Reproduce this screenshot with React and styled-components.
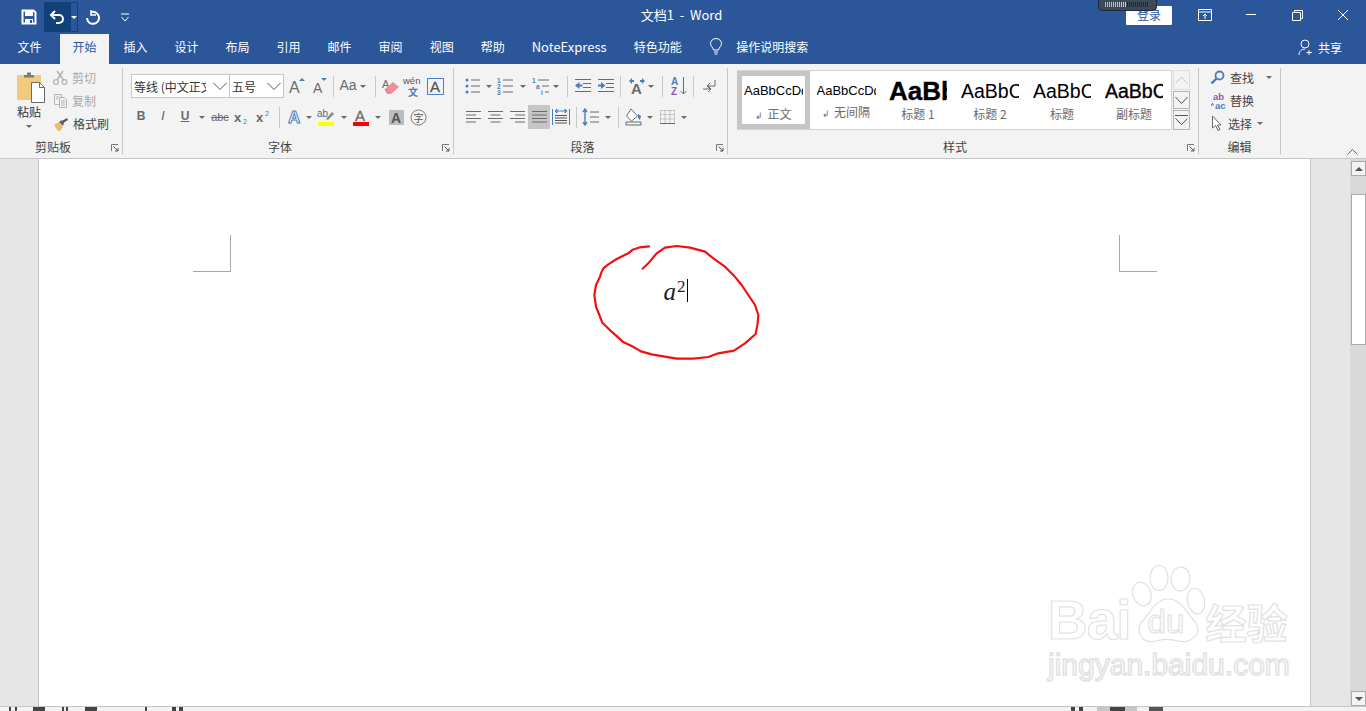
import React from "react";
import styled, { createGlobalStyle } from "styled-components";

const UI = `"Noto Sans CJK SC", "Liberation Sans", sans-serif`;
const LAT = `"Liberation Sans", "Noto Sans CJK SC", sans-serif`;
const GRAY = "#6a6a6a";
const BLUE = "#4a7ebb";

const Global = createGlobalStyle`
  html, body { margin: 0; padding: 0; background: #fff; overflow: hidden; }
  * { box-sizing: border-box; }
`;
const Shell = styled.div`
  width: 1366px; height: 711px; display: flex; flex-direction: column; overflow: hidden;
  font-family: ${UI}; font-size: 12px; color: #444;
`;
const TitleBar = styled.header`
  position: relative; height: 32px; flex: none; background: #2b579a; color: #fff;
  display: grid; grid-template-columns: 1fr auto 1fr;
`;
const Qat = styled.div`display: flex; padding: 2px 0 0 18px; align-items: flex-start;`;
const QatBtn = styled.div`
  width: ${p => p.$w}px; height: 30px; margin-left: ${p => p.$ml || 0}px; display: flex; align-items: center; justify-content: center;
  background: ${p => p.$on ? "#124078" : "transparent"};
  border: ${p => p.$edge ? "1px solid #124078" : "0"};
`;
const WhiteCaret = styled.span`width: 0; height: 0; border: 3px solid transparent; border-top: 3px solid #fff; border-bottom: 0;`;
const DocTitle = styled.div`font-size: 13px; line-height: 30px; white-space: pre; margin-left: -3px;`;
const WinArea = styled.div`display: flex; justify-content: flex-end; align-items: flex-start;`;
const Login = styled.div`
  width: 46px; height: 19px; margin: 6px 10px 0 0; background: #fff; color: #2b579a; border-radius: 1px;
  text-align: center; line-height: 18px; font-size: 12px;
`;
const WinBtn = styled.div`width: 46px; height: 30px; display: flex; align-items: center; justify-content: center;`;
const Meter = styled.div`
  position: absolute; left: 1098px; top: -1px; width: 59px; height: 12px; background: #3d4a5a; border: 1px solid #20293a;
  border-radius: 0 0 4px 4px; display: flex; gap: 1px; padding: 2px 5px 0 6px;
`;
const Tick = styled.i`width: 1px; height: 5px; background: ${p => p.$c};`;

const TabBar = styled.nav`height: 32px; flex: none; background: #2b579a; color: #fff; display: flex; padding-left: 5px; align-items: stretch;`;
const Tab = styled.div`
  padding: 0 12.5px; margin: 2px ${p => p.$mr || 2}px 0 0; line-height: 25px; font-size: ${p => p.$s || 12}px; white-space: nowrap;
  background: ${p => p.$on ? "#f3f3f3" : "transparent"}; color: ${p => p.$on ? "#2b579a" : "#fff"};
`;
const Search = styled.div`display: flex; align-items: center; gap: 13px; margin: 0 0 4px 13px; font-size: 12px;`;
const Share = styled.div`display: flex; align-items: center; gap: 5px; margin: 0 24px 2px auto;`;

const Ribbon = styled.section`
  height: 95px; flex: none; background: #f3f3f3; border-bottom: 1px solid #c6c6c6; padding: 4px 0;
  display: flex; position: relative;
`;
const Group = styled.div`
  width: ${p => p.$w}px; flex: none; height: 86px; border-right: 1px solid #c6c6c6; display: flex; flex-direction: column;
`;
const Body = styled.div`flex: 1; min-height: 0; display: flex; flex-direction: column;`;
const RowPair = styled.div`display: flex; flex-direction: column; gap: 7px; padding-top: 6px;`;
const Row = styled.div`display: flex; align-items: center; height: 24px; margin-left: ${p => p.$ml || 0}px;`;
const Foot = styled.div`
  height: 16px; flex: none; display: grid; grid-template-columns: 1fr auto 1fr; align-items: center;
  padding-right: ${p => p.$launch ? 16 : 0}px; padding-top: 2px; font-size: 12px; line-height: 14px; color: #444;
`;
const Launcher = styled.svg`grid-column: 3; justify-self: end; margin-right: -13px; margin-top: 1px;`;
const Tool = styled.div`
  width: ${p => p.$w || 22}px; height: ${p => p.$h || 22}px; flex: none; margin-left: ${p => p.$ml || 0}px;
  display: flex; align-items: center; justify-content: center; background: ${p => p.$on ? "#c6c6c6" : "transparent"};
`;
const Glyph = styled.span`
  font-family: ${LAT}; font-size: ${p => p.$s || 13}px; font-weight: ${p => p.$b ? 700 : 400}; font-style: ${p => p.$i ? "italic" : "normal"};
  color: ${p => p.$c || GRAY}; text-decoration: ${p => p.$d || "none"}; line-height: 1.1; white-space: nowrap;
`;
const Caret = styled.span`
  width: ${p => p.$w || 8}px; flex: none; margin-left: ${p => p.$ml || 0}px; height: 3px; display: flex; justify-content: center;
  &::before { content: ""; border: 3px solid transparent; border-top: 3px solid ${GRAY}; border-bottom: 0; }
`;
const VSep = styled.i`width: 1px; height: 21px; flex: none; background: #c8c8c8; margin-left: ${p => p.$ml}px; margin-right: ${p => p.$mr}px;`;

const ClipRow = styled.div`display: flex; flex: 1; min-height: 0;`;
const PasteCol = styled.div`width: 42px; margin-left: 8px; display: flex; flex-direction: column; align-items: center; padding-top: 3px; flex: none;`;
const PasteArt = styled.div`margin-left: 4px; height: 32px;`;
const PasteLabel = styled.div`font-size: 12px; color: #333; line-height: 16px; margin: 1px 0 5px;`;
const SmallCol = styled.div`display: flex; flex-direction: column; margin-left: ${p => p.$ml}px; margin-top: -2px;`;
const SmallBtn = styled.div`height: 23px; display: flex; align-items: center; gap: ${p => p.$gap || 4}px; color: ${p => p.$off ? "#a8a8a8" : "#444"}; font-size: 12px; white-space: nowrap;`;
const Combo = styled.div`
  width: ${p => p.$w}px; height: 24px; flex: none; background: #fff; border: 1px solid #c6c6c6; margin-left: ${p => p.$ml || 0}px;
  display: flex; align-items: center; justify-content: space-between; padding: 0 2px 0 2px; color: #333; font-size: 12px;
`;
const ComboText = styled.span`width: ${p => p.$w}px; overflow: hidden; white-space: nowrap;`;

const GalleryWrap = styled.div`display: flex; margin: 2px 0 0 9px;`;
const Gallery = styled.div`width: 435px; height: 60px; background: #fff; border: 1px solid #d4d4d4; border-left: 0; display: flex; flex: none;`;
const StyleItem = styled.div`
  width: ${p => p.$on ? 73 : 72}px; flex: none; display: flex; flex-direction: column; align-items: center; justify-content: space-between;
  border: ${p => p.$on ? "5px solid #c6c6c6" : "0"}; padding: ${p => p.$on ? "2px 0 1px" : "7px 0 8px"};
`;
const Preview = styled.div`
  width: ${p => p.$w}px; height: 26px; overflow: hidden; white-space: nowrap; line-height: 26px; font-family: ${LAT}; color: #000;
  font-size: ${p => p.$s}px; font-weight: ${p => p.$b ? 700 : 400};
  -webkit-text-stroke: ${p => p.$stroke ? ".35px #000" : "0"};
`;
const StyleName = styled.div`font-size: 12px; line-height: 15px; color: #6a6a6a; white-space: nowrap;`;
const Mark = styled.span`font-size: 9px; margin-right: 4px;`;
const ScrollCol = styled.div`display: flex; flex-direction: column; gap: 1px; width: 17px; margin-left: 1px; flex: none;`;
const ScrollCell = styled.div`
  height: ${p => p.$h}px; border: 1px solid ${p => p.$off ? "#dcdcdc" : "#b4b4b4"}; display: flex; align-items: center; justify-content: center;
`;
const Collapse = styled.svg`position: absolute; left: 1347px; top: 85px;`;

const DocArea = styled.main`flex: 1; min-height: 0; display: flex; background: #e6e6e6;`;
const Gutter = styled.div`width: ${p => p.$w}px; flex: none;`;
const Page = styled.div`
  width: 1273px; flex: none; position: relative; background: #fff; border-left: 1px solid #c6c6c6; border-right: 1px solid #c6c6c6;
  padding: 76px 153px 0 154px; overflow: hidden;
`;
const Marks = styled.div`display: flex; justify-content: space-between;`;
const CropMark = styled.div`
  width: 38px; height: 37px; border-bottom: 1px solid #a8a8a8;
  ${p => p.$side === "left" ? "border-right" : "border-left"}: 1px solid #a8a8a8;
`;
const MathLine = styled.div`display: flex; justify-content: center; align-items: flex-start; margin-top: 7px; height: 24px; padding-left: 1px;`;
const Var = styled.span`font-family: "Liberation Serif", serif; font-style: italic; font-size: 25px; line-height: 25px; color: #222;`;
const Sup = styled.span`font-family: "Liberation Serif", serif; font-size: 17px; line-height: 16px; color: #222; margin-left: 1px;`;
const TextCaret = styled.i`width: 1px; height: 23px; background: #000; margin-left: 1px;`;
const Scribble = styled.svg`position: absolute; left: 541px; top: 76px; overflow: visible;`;
const Watermark = styled.div`position: absolute; left: 1009px; top: 406px; width: 250px; display: flex; flex-direction: column;`;
const WmRow = styled.div`display: flex; align-items: flex-end; height: 78px;`;
const WmText = styled.span`
  font-family: ${p => p.$cjk ? UI : LAT}; font-size: ${p => p.$s}px; line-height: ${p => p.$lh}px; color: #fff; font-weight: ${p => p.$w || 400};
  letter-spacing: ${p => p.$ls || 0}px; -webkit-text-stroke: ${p => p.$sw || 1.2}px #e2e2e2; white-space: nowrap;
`;
const Paw = styled.div`position: relative; width: 75px; height: 78px; flex: none;`;
const PawDu = styled(WmText)`position: absolute; left: 17px; top: 39px;`;
const WmLine = styled(WmText)`margin-top: 5px; display: block;`;

const ScrollBar = styled.aside`width: 16px; flex: none; background: #d9d9d9; padding-top: 2px; display: flex; flex-direction: column;`;
const ArrowBtn = styled.div`width: 15px; height: ${p => p.$h}px; margin-left: 1px; background: #f3f3f3; border: 1px solid #ababab; display: flex; align-items: center; justify-content: center;`;
const Thumb = styled.div`width: 15px; height: 151px; margin: 18px 0 auto 1px; background: #fff; border: 1px solid #ababab;`;
const StatusBar = styled.footer`height: 5px; flex: none; background: #f3f3f3; border-top: 1px solid #c6c6c6; display: flex; overflow: hidden;`;
const StatusBit = styled.i`
  width: ${p => p.$w}px; height: 4px; flex: none; margin-left: ${p => p.$ml}px; background: ${p => p.$c || "#444"};
  display: flex; justify-content: center;
`;

const S = ({ w = 18, h = 18, children, ...r }) => <svg width={w} height={h} viewBox={`0 0 ${w} ${h}`} fill="none" {...r}>{children}</svg>;
const L = (p) => <path stroke={GRAY} strokeWidth="1" {...p} />;

const Lines = ({ d }) => <L d={d} />;
const SaveIcon = () => <S w={16} h={16}><path d="M1.500 1.500h11l2 2v11h-13z" stroke="#fff" strokeWidth="2" /><path d="M4 2h8v5H4zM4 10h8v5H4z" fill="#fff" /><path d="M9 11h2v3H9z" fill="#2b579a" /></S>;
const UndoIcon = () => <S w={16} h={16}><path d="M6 2 2 6l4 4" stroke="#fff" strokeWidth="2" /><path d="M2.500 6H10a3.500 3.500 0 0 1 0 8H7" stroke="#fff" strokeWidth="2" /></S>;
const RedoIcon = () => <S w={16} h={16}><path d="M6 1v5h5" stroke="#fff" strokeWidth="1.600" /><path d="M6 3.200A6 6 0 1 1 2 9" stroke="#fff" strokeWidth="2" /></S>;
const CustomizeIcon = () => <S w={10} h={9}><path d="M1 1h8" stroke="#fff" /><path d="M1.500 4 5 8l3.500-4" stroke="#fff" /></S>;

const PasteIcon = () => <S w={30} h={32}>
  <path d="M1 4h24v25H1z" fill="#f1c97f" />
  <path d="M8 6V4h3V1.500h4V4h3v2.500H8z" fill="#7a7a7a" />
  <path d="M15.500 11.500h8l5 5v15h-13z" fill="#fff" stroke="#6a6a6a" />
  <path d="M23.500 11.500v5h5" stroke="#6a6a6a" />
</S>;
const ScissorsIcon = () => <S w={15} h={15}><circle cx="3" cy="12" r="2.400" stroke="#b4b4b4" strokeWidth="1.300" /><circle cx="11.500" cy="12" r="2.400" stroke="#b4b4b4" strokeWidth="1.300" /><path d="M4 10 10 1M10.500 10 4 1" stroke="#b4b4b4" strokeWidth="1.600" /></S>;
const CopyIcon = () => <S w={15} h={15}><path d="M1.500 1.500h7v10h-7z" stroke="#b4b4b4" /><path d="M6.500 4.500h5l2 2v8h-7z" fill="#f3f3f3" stroke="#b4b4b4" /><path d="M8 8h4M8 10h4M8 12h4M3 4h3M3 6h2" stroke="#b4b4b4" /></S>;
const BrushIcon = () => <S w={16} h={14}><path d="M1 8l5-3 4 5-3 4H5z" fill="#e9bc72" /><path d="M6 5l3-2 2 3-1 3z" fill="#666" /><path d="M9 4l5-3 1 2-5 3z" fill="#555" /></S>;

const Grow = ({ up }) => <S w={22} h={22}>
  <text x={up ? 3 : 5} y="18" fontFamily="Liberation Sans" fontSize={up ? 16 : 14} fill={GRAY}>A</text>
  <path d={up ? "M13 6l3-3 3 3z" : "M13 3h6l-3 3z"} fill={BLUE} />
</S>;
const Eraser = () => <S w={20} h={20}><text x="1" y="12" fontFamily="Liberation Sans" fontSize="11" fill={GRAY}>A</text><path d="M4 13l8-7 6 5-8 7H7z" fill="#ec8f9c" /><path d="M4 13l3 5" stroke="#c26" strokeWidth=".6" /></S>;
const Wen = () => <S w={22} h={22}><text x="1" y="9" fontFamily="Liberation Sans" fontSize="9.500" fill="#555">wén</text><text x="6" y="21" fontFamily="Noto Sans CJK SC" fontSize="10" fontWeight="700" fill={BLUE}>文</text></S>;
const BoxA = () => <S w={17} h={17}><path d="M.5.500h16v16H.5z" stroke={BLUE} /><text x="3" y="14" fontFamily="Liberation Sans" fontSize="15" stroke="#555" strokeWidth=".3" fill="#555">A</text></S>;
const GlowA = () => <S w={20} h={20}><text x="3" y="16" fontFamily="Liberation Sans" fontWeight="700" fontSize="17" fill="#fff" stroke={BLUE} strokeWidth="1">A</text></S>;
const Highlight = () => <S w={18} h={20}><text x="0" y="10" fontFamily="Liberation Sans" fontSize="10" fill={GRAY}>ab</text><path d="M9 12l6-7 2 2-6 6z" fill="#8a8a8a" /><path d="M1 15h16v4H1z" fill="#ff0" /></S>;
const ColorA = () => <S w={18} h={20}><text x="3" y="14" fontFamily="Liberation Sans" fontSize="15" fill={GRAY} stroke={GRAY} strokeWidth=".3">A</text><path d="M1 15h16v4H1z" fill="#f00" /></S>;
const ShadeA = () => <S w={15} h={15}><path d="M0 0h15v15H0z" fill="#bdbdbd" /><text x="2" y="12.500" fontFamily="Liberation Sans" fontSize="14" fontWeight="700" fill="#555">A</text></S>;
const Circled = () => <S w={17} h={17}><circle cx="8.500" cy="8.500" r="7.500" stroke="#777" /><text x="3.500" y="12.500" fontFamily="Noto Sans CJK SC" fontSize="10" fill="#555">字</text></S>;
const Sub = ({ up }) => <S w={18} h={16}><text x="1" y="13" fontFamily="Liberation Sans" fontWeight="700" fontSize="13" fill={GRAY}>x</text><text x="10" y={up ? 7 : 15} fontFamily="Liberation Sans" fontSize="7" fill={BLUE}>2</text></S>;

const Dot = ({ y }) => <circle cx="3" cy={y} r="1.500" fill={BLUE} />;
const Bullets = () => <S><Dot y={3} /><Dot y={9} /><Dot y={15} /><Lines d="M7 3h9M7 9h9M7 15h9" /></S>;
const Small = ({ x, y, t }) => <text x={x} y={y} fontFamily="Liberation Sans" fontWeight="700" fontSize="6.500" fill={BLUE}>{t}</text>;
const Numbers = () => <S><Small x={0} y={6} t="1" /><Small x={0} y={12} t="2" /><Small x={0} y={18} t="3" /><Lines d="M6 3h10M6 9h10M6 15h10" /></S>;
const Multi = () => <S><Small x={0} y={6} t="1" /><Small x={4} y={12} t="a" /><Small x={9} y={18} t="i" /><Lines d="M6 3h11M10 9h7M13 15h4" /></S>;
const Outdent = () => <S><Lines d="M1 2.500h16M9 6.500h8M9 10.500h8M1 14.500h16" /><path d="M1 8.500 5.500 5v2.500h3v2h-3V12z" fill={BLUE} /></S>;
const Indent = () => <S><Lines d="M1 2.500h16M9 6.500h8M9 10.500h8M1 14.500h16" /><path d="M8.500 8.500 4 5v2.500H1v2h3V12z" fill={BLUE} /></S>;
const Layout = () => <S w={18} h={20}><text x="3" y="18" fontFamily="Liberation Sans" fontWeight="700" fontSize="15" fill={GRAY}>A</text><path d="M1 5l3-3v2h2v2H4v2zM17 5l-3-3v2h-2v2h2v2z" fill={BLUE} /></S>;
const Sort = () => <S w={18} h={22}><text x="1" y="10" fontFamily="Liberation Sans" fontWeight="700" fontSize="10" fill={BLUE}>A</text><text x="1" y="20" fontFamily="Liberation Sans" fontWeight="700" fontSize="10" fill="#8e5ab0">Z</text><L d="M13.500 2v17M10.500 16l3 3 3-3" /></S>;
const ParaMark = () => <S w={14} h={14}><L d="M13 1v6H5M8 4 5 7l3 3" /><L d="M1 10h8M6 7l3 3-3 3" /></S>;
const Align = ({ d }) => <S w={16} h={14}><Lines d={d} /></S>;
const Dist = () => <S w={18} h={18}><path d="M.5 1v16M17.500 1v16" stroke={BLUE} /><path d="M3 3h12M3 3l2-2v4zM15 3l-2-2v4z" stroke={BLUE} /><path d="M3 7.500h12M3 10h12M3 12.500h12M3 15h12" stroke="#555" /></S>;
const Spacing = () => <S w={18} h={18}><path d="M3 1v16M1 4l2-3 2 3M1 14l2 3 2-3" stroke={BLUE} strokeWidth="1.400" /><Lines d="M8 4h9M8 9h9M8 14h9" /></S>;
const Shading = () => <S w={18} h={18}><path d="M1 14h15v3H1z" stroke={GRAY} /><path d="M6 1 1.500 8l5 5 6-5z" fill="#fff" stroke={GRAY} /><path d="M13 6l3 2-1 4-2-2z" fill={BLUE} /></S>;
const Borders = () => <S w={15} h={14}><path d="M.5.500h14M.5 4.500h14M.5 9h14M.5.500v13M5 .5v13M10 .5v13M14.500.500v13" stroke="#9a9a9a" strokeDasharray="1 1" /><path d="M0 13.500h15" stroke={GRAY} /></S>;
const Chevron = ({ w = 14, c = "#555", up, h = 8 }) => <S w={w} h={h}><path d={up ? `M.5 ${h - .5}L${w / 2} 1 ${w - .5} ${h - .5}` : `M.5 1L${w / 2} ${h - .5} ${w - .5} 1`} stroke={c} /></S>;
const FindIcon = () => <S w={15} h={15}><circle cx="9.500" cy="5.500" r="4" stroke={BLUE} strokeWidth="1.800" /><path d="M6.500 8.500 1.500 13.500" stroke={BLUE} strokeWidth="2.400" /></S>;
const ReplaceIcon = () => <S w={17} h={18}><text x="3" y="8" fontFamily="Liberation Sans" fontWeight="700" fontSize="9.500" fill="#8e5ab0">ab</text><text x="5" y="17" fontFamily="Liberation Sans" fontWeight="700" fontSize="9.500" fill="#4f7fb0">ac</text><path d="M1 13h3M1 13l2-2" stroke={BLUE} /></S>;
const CursorIcon = () => <S w={13} h={17}><path d="M2.500 1v12l3-2.500 2.500 5 2-1-2.500-4.500H11z" stroke={GRAY} fill="#fff" /></S>;
const LaunchIcon = () => <><path d="M.5 7V.5H7" stroke="#777" /><path d="M2.500 2.500 7 7M4 7h3V4" stroke="#555" /></>;
const Bulb = () => <S w={14} h={17}><path d="M4.500 12C4 9 1.500 8.500 1.500 5.500a5.500 5 0 0 1 11 0C12.500 8.500 10 9 9.500 12zM5 14h4M5.500 16h3" stroke="#fff" /></S>;
const Person = () => <S w={15} h={17}><circle cx="7" cy="5" r="4" stroke="#fff" /><path d="M1 16c0-4 3-6 6-6M11 11v5M8.500 13.500h5.500" stroke="#fff" /></S>;
const Launch = () => <Launcher width="8" height="8" viewBox="0 0 8 8" fill="none"><LaunchIcon /></Launcher>;

const meterColors = ["#6fd6c9", "#7cd8bc", "#85daae", "#90dba0", "#a0dc92", "#b3dd84", "#c4de7a", "#cfe070"];
const SCRIBBLE = "207,34 180,37 158,44 145,55 128,63 110,72 85,88 70,100 64,113 60,125 48,150 43,180 48,215 58,240 67,263 95,290 128,320 155,333 183,349 215,358 250,364 290,371 340,371 385,366 415,355 462,347 495,325 527,297 533,265 535,240 525,210 505,180 485,150 462,122 435,95 400,70 375,50 330,38 290,33 255,38 230,55 205,85 188,101";

const TabsList = ["插入", "设计", "布局", "引用", "邮件", "审阅", "视图", "帮助"];
const STYLES = [
  { n: "正文", t: "AaBbCcDd", s: 13, w: 59, m: 1, on: 1 },
  { n: "无间隔", t: "AaBbCcDd", s: 13, w: 59, m: 1 },
  { n: "标题 1", t: "AaBbC", s: 26, w: 58, stroke: 1, b: 1 },
  { n: "标题 2", t: "AaBbC", s: 19.500, w: 58 },
  { n: "标题", t: "AaBbC", s: 19.500, w: 58 },
  { n: "副标题", t: "AaBbC", s: 19.500, w: 58, stroke: 1 },
];

export default function App() {
  return (
    <Shell>
      <Global />
      <TitleBar>
        <Qat>
          <QatBtn $w={22}><SaveIcon /></QatBtn>
          <QatBtn $w={26} $ml={4} $on><UndoIcon /></QatBtn>
          <QatBtn $w={8} $edge><WhiteCaret /></QatBtn>
          <QatBtn $w={22} $ml={4}><RedoIcon /></QatBtn>
          <QatBtn $w={22} $ml={10}><CustomizeIcon /></QatBtn>
        </Qat>
        <DocTitle>文档1  -  Word</DocTitle>
        <WinArea>
          <Login>登录</Login>
          <WinBtn><S w={14} h={12}><path d="M.5.500h13v11H.5zM0 3h14M7 10V5M5 7l2-2 2 2" stroke="#fff" /></S></WinBtn>
          <WinBtn><S w={12} h={2}><path d="M1 .5h10" stroke="#fff" /></S></WinBtn>
          <WinBtn><S w={11} h={11}><path d="M.5 2.500h8v8h-8zM2.500 2.500v-2h8v8h-2" stroke="#fff" /></S></WinBtn>
          <WinBtn><S w={12} h={12}><path d="M1 1l10 10M11 1 1 11" stroke="#fff" /></S></WinBtn>
        </WinArea>
        <Meter>
          {Array.from({ length: 22 }, (_, i) => <Tick key={i} $c={i < 11 ? meterColors[Math.min(7, Math.floor(i * .75))] : "#1f2935"} />)}
        </Meter>
      </TitleBar>

      <TabBar>
        <Tab $mr={6}>文件</Tab>
        <Tab $on>开始</Tab>
        {TabsList.map(t => <Tab key={t}>{t}</Tab>)}
        <Tab $s={13}>NoteExpress</Tab>
        <Tab>特色功能</Tab>
        <Search><Bulb /><span>操作说明搜索</span></Search>
        <Share><Person /><span>共享</span></Share>
      </TabBar>

      <Ribbon>
        <Group $w={123}>
          <ClipRow>
            <PasteCol>
              <PasteArt><PasteIcon /></PasteArt>
              <PasteLabel>粘贴</PasteLabel>
              <Caret />
            </PasteCol>
            <SmallCol $ml={3}>
              <SmallBtn $off><ScissorsIcon /><span>剪切</span></SmallBtn>
              <SmallBtn $off><CopyIcon /><span>复制</span></SmallBtn>
              <SmallBtn><BrushIcon /><span>格式刷</span></SmallBtn>
            </SmallCol>
          </ClipRow>
          <Foot $launch><span />剪贴板<Launch /></Foot>
        </Group>

        <Group $w={331}>
          <Body>
            <RowPair>
              <Row $ml={8}>
                <Combo $w={99}><ComboText $w={72}>等线 (中文正文)</ComboText><Chevron /></Combo>
                <Combo $w={55} $ml={-1}><ComboText $w={30}>五号</ComboText><Chevron /></Combo>
                <Tool $ml={2}><Grow up /></Tool>
                <Tool><Grow /></Tool>
                <VSep $ml={3} $mr={3} />
                <Tool><Glyph $s={14}>Aa</Glyph></Tool>
                <Caret />
                <VSep $ml={8} $mr={4} />
                <Tool><Eraser /></Tool>
                <Tool><Wen /></Tool>
                <Tool><BoxA /></Tool>
              </Row>
              <Row $ml={7}>
                <Tool><Glyph $b $s={12}>B</Glyph></Tool>
                <Tool><Glyph $i $s={12} $c="#555">I</Glyph></Tool>
                <Tool><Glyph $d="underline" $s={12} $b>U</Glyph></Tool>
                <Caret $w={12} />
                <Tool $ml={1}><Glyph $s={11} $d="line-through">abc</Glyph></Tool>
                <Tool><Sub /></Tool>
                <Tool><Sub up /></Tool>
                <VSep $ml={4} $mr={4} />
                <Tool><GlowA /></Tool>
                <Caret $w={6} />
                <Tool $ml={3}><Highlight /></Tool>
                <Caret $w={12} $ml={1} />
                <Tool><ColorA /></Tool>
                <Caret $w={12} />
                <Tool $ml={1}><ShadeA /></Tool>
                <Tool><Circled /></Tool>
              </Row>
            </RowPair>
          </Body>
          <Foot $launch><span />字体<Launch /></Foot>
        </Group>

        <Group $w={274}>
          <Body>
            <RowPair>
              <Row $ml={8}>
                <Tool><Bullets /></Tool>
                <Caret $w={10} />
                <Tool $ml={1}><Numbers /></Tool>
                <Caret $w={12} />
                <Tool $ml={1}><Multi /></Tool>
                <Caret $w={8} />
                <VSep $ml={7} $mr={4} />
                <Tool><Outdent /></Tool>
                <Tool $ml={1}><Indent /></Tool>
                <VSep $ml={3} $mr={5} />
                <Tool><Layout /></Tool>
                <Caret $w={6} />
                <VSep $ml={8} $mr={5} />
                <Tool><Sort /></Tool>
                <VSep $ml={3} $mr={4} />
                <Tool><ParaMark /></Tool>
              </Row>
              <Row $ml={8}>
                <Tool><Align d="M1 1.500h15M1 5h10M1 8.500h15M1 12h10" /></Tool>
                <Tool><Align d="M1 1.500h15M3.500 5h10M1 8.500h15M3.500 12h10" /></Tool>
                <Tool><Align d="M1 1.500h15M6 5h10M1 8.500h15M6 12h10" /></Tool>
                <Tool $on $h={24}><Align d="M1 1.500h15M1 5h15M1 8.500h15M1 12h15" /></Tool>
                <Tool><Dist /></Tool>
                <VSep $ml={4} $mr={3} />
                <Tool><Spacing /></Tool>
                <Caret $w={12} />
                <VSep $ml={4} $mr={4} />
                <Tool><Shading /></Tool>
                <Caret $w={10} />
                <Tool $ml={1}><Borders /></Tool>
                <Caret $w={12} />
              </Row>
            </RowPair>
          </Body>
          <Foot $launch><span />段落<Launch /></Foot>
        </Group>

        <Group $w={471}>
          <Body>
            <GalleryWrap>
              <Gallery>
                {STYLES.map(s => (
                  <StyleItem key={s.n} $on={s.on}>
                    <Preview $s={s.s} $w={s.w} $b={s.b} $stroke={s.stroke}>{s.t}</Preview>
                    <StyleName>{s.m ? <Mark>↲</Mark> : null}{s.n}</StyleName>
                  </StyleItem>
                ))}
              </Gallery>
              <ScrollCol>
                <ScrollCell $h={20} $off><Chevron w={13} up c="#c8c8c8" /></ScrollCell>
                <ScrollCell $h={18}><Chevron w={13} /></ScrollCell>
                <ScrollCell $h={20}><S w={13} h={12}><path d="M0 1.500h13M.5 4.500 6.500 10.500 12.500 4.500" stroke="#555" /></S></ScrollCell>
              </ScrollCol>
            </GalleryWrap>
          </Body>
          <Foot $launch><span />样式<Launch /></Foot>
        </Group>

        <Group $w={82}>
          <Body>
            <SmallCol $ml={11}>
              <SmallBtn $gap={5}><FindIcon /><span>查找</span><Caret $ml={6} /></SmallBtn>
              <SmallBtn $gap={3}><ReplaceIcon /><span>替换</span></SmallBtn>
              <SmallBtn $gap={5}><CursorIcon /><span>选择</span><Caret $ml={-1} /></SmallBtn>
            </SmallCol>
          </Body>
          <Foot><span />编辑<span /></Foot>
        </Group>
        <Collapse width="11" height="6" viewBox="0 0 11 6" fill="none"><path d="M.5 5.500 5.500.500l5 5" stroke="#666" /></Collapse>
      </Ribbon>

      <DocArea>
        <Gutter $w={38} />
        <Page>
          <Marks><CropMark $side="left" /><CropMark $side="right" /></Marks>
          <MathLine>
            <Var>a</Var><Sup>2</Sup><TextCaret />
          </MathLine>
          <Scribble width="190" height="130" viewBox="0 0 570 390" fill="none">
            <polyline points={SCRIBBLE} stroke="#f40f0f" strokeWidth="6.500" strokeLinejoin="round" strokeLinecap="round" />
          </Scribble>
          <Watermark>
            <WmRow>
              <WmText $s={55} $lh={46} $w={700} $ls={-1}>Bai</WmText>
              <Paw>
                <svg width="75" height="78" viewBox="0 0 75 78" fill="none">
                  <g stroke="#e0e0e0" fill="#fff" strokeWidth="1.200">
                    <ellipse cx="11" cy="29" rx="9" ry="12" transform="rotate(-20 11 29)" />
                    <ellipse cx="28" cy="13" rx="9" ry="12.500" />
                    <ellipse cx="49.500" cy="14" rx="9.500" ry="12" transform="rotate(6 49.500 14)" />
                    <ellipse cx="65" cy="36" rx="8.500" ry="13" transform="rotate(-12 65 36)" />
                    <path d="M37 34C50 34 56 48 65 58 72 70 58 79 47 76 40 74 32 74 24 76 13 79 4 69 10 58 18 50 24 34 37 34Z" />
                  </g>
                </svg>
                <PawDu $s={33} $lh={36}>du</PawDu>
              </Paw>
              <WmText $cjk $s={41} $lh={44} $w={700}>经验</WmText>
            </WmRow>
            <WmLine $s={30} $lh={34} $sw={1.500}>jingyan.baidu.com</WmLine>
          </Watermark>
        </Page>
        <Gutter $w={39} />
        <ScrollBar>
          <ArrowBtn $h={15}><S w={8} h={4}><path d="M0 4l4-4 4 4z" fill="#555" /></S></ArrowBtn>
          <Thumb />
          <ArrowBtn $h={15}><S w={8} h={4}><path d="M0 0l4 4 4-4z" fill="#555" /></S></ArrowBtn>
        </ScrollBar>
      </DocArea>

      <StatusBar>
        <StatusBit $w={2} $ml={9} />
        <StatusBit $w={2} $ml={4} />
        <StatusBit $w={12} $ml={16} />
        <StatusBit $w={2} $ml={17} />
        <StatusBit $w={2} $ml={2} />
        <StatusBit $w={12} $ml={17} />
        <StatusBit $w={2} $ml={48} />
        <StatusBit $w={4} $ml={25} />
        <StatusBit $w={4} $ml={3} />
        <StatusBit $w={4} $ml={888} />
        <StatusBit $w={4} $ml={4} />
        <StatusBit $w={40} $ml={14} $c="#c6c6c6"><StatusBit $w={15} $ml={0} /></StatusBit>
        <StatusBit $w={14} $ml={12} $c="#555" />
      </StatusBar>
    </Shell>
  );
}
